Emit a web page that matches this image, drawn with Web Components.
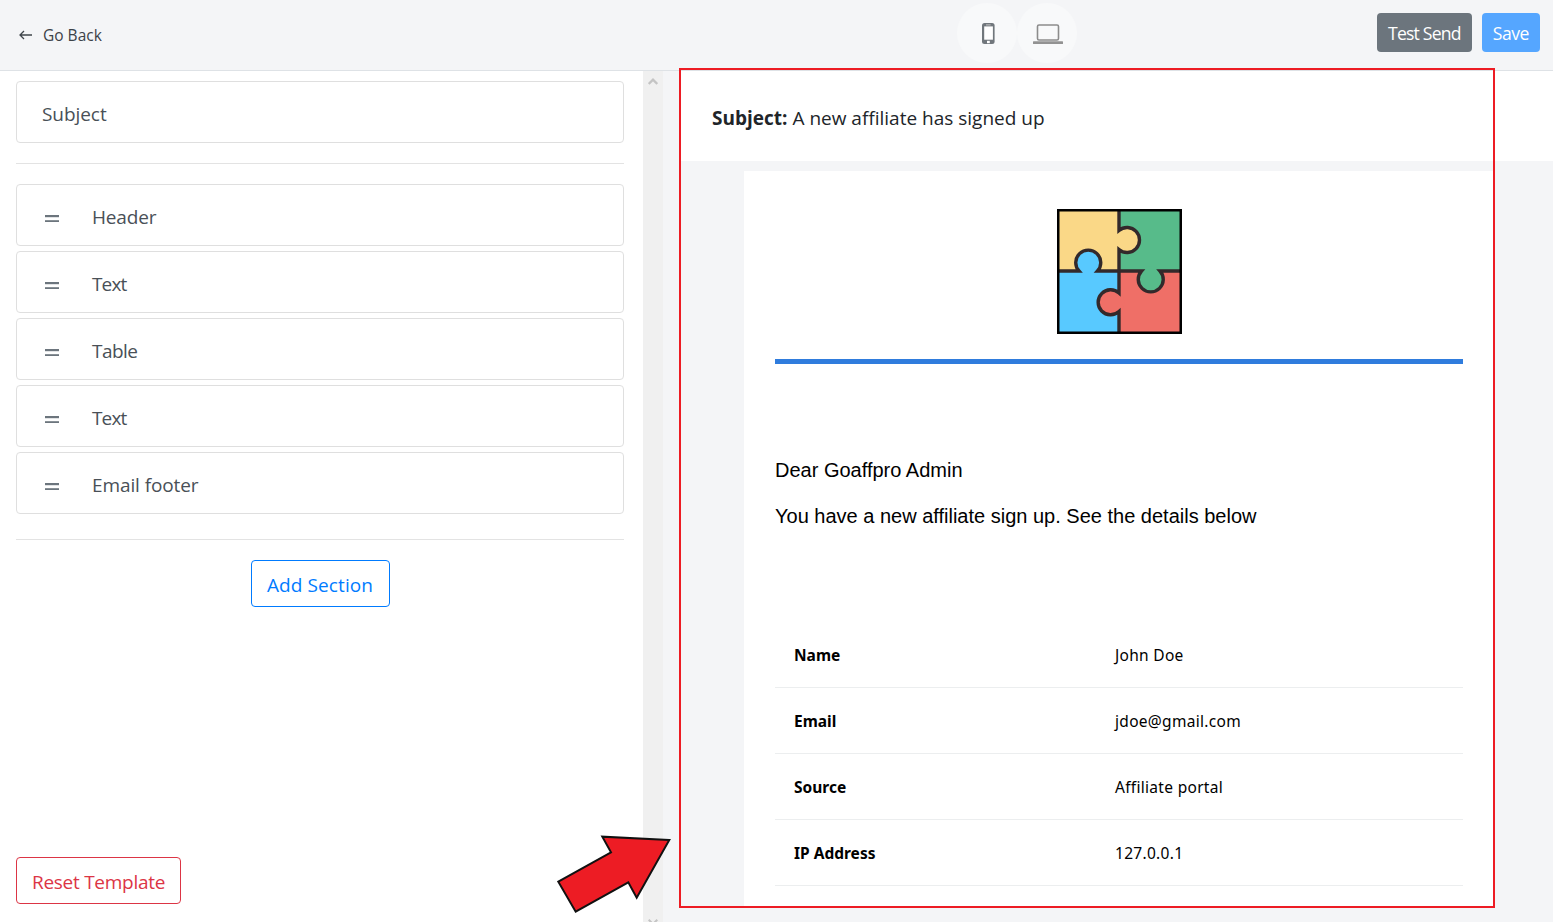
<!DOCTYPE html>
<html lang="en">
<head>
<meta charset="utf-8">
<title>Email template editor</title>
<style>
html,body{margin:0;padding:0;height:100%;overflow:hidden;background:#fff}
body{font-family:"Open Sans","Noto Sans",sans-serif;color:#212529}
editor-app{height:922px}
</style>
</head>
<body>
<editor-app>
  <top-bar slot="top"></top-bar>
  <side-panel slot="left">
    <section-row plain style="--ls:-.06px">Subject</section-row>
    <divider-line style="--before:20px;--after:20px"></divider-line>
    <section-row style="--ls:-.18px">Header</section-row>
    <section-row style="--ls:-.85px">Text</section-row>
    <section-row style="--ls:-.55px">Table</section-row>
    <section-row style="--ls:-.85px">Text</section-row>
    <section-row style="--ls:-.1px">Email footer</section-row>
    <divider-line style="--before:25px;--after:20px"></divider-line>
    <action-button tone="blue" centered style="--ls:.1px">Add Section</action-button>
    <action-button slot="foot" tone="red" style="--ls:-.28px">Reset Template</action-button>
  </side-panel>
  <fake-scrollbar slot="scroll"></fake-scrollbar>
  <email-preview slot="right">
    <strong slot="subject-label">Subject:</strong>
    <span slot="subject-text">A new affiliate has signed up</span>
    <info-row label="Name" value="John Doe"></info-row>
    <info-row label="Email" value="jdoe@gmail.com"></info-row>
    <info-row label="Source" value="Affiliate portal"></info-row>
    <info-row label="IP Address" value="127.0.0.1"></info-row>
  </email-preview>
  <callout-overlay slot="overlay"></callout-overlay>
</editor-app>
<script>
function def(name, html, init){
  customElements.define(name, class extends HTMLElement{
    constructor(){super();this.attachShadow({mode:'open'}).innerHTML=html;}
    connectedCallback(){ if(init) init(this); }
  });
}
def('editor-app',`<style>
:host{display:grid;grid-template-columns:643px 20px 1fr;grid-template-rows:71px 1fr;position:relative;overflow:hidden;width:1553px}
.top{grid-column:1/4}
.clip{min-height:0;overflow:hidden;display:flex}
::slotted(*){min-width:0}
</style>
<div class="top"><slot name="top"></slot></div>
<div class="clip"><slot name="left"></slot></div>
<div class="clip"><slot name="scroll"></slot></div>
<div class="clip"><slot name="right"></slot></div>
<slot name="overlay"></slot>`);

def('top-bar',`<style>
:host{display:flex;align-items:center;height:70px;border-bottom:1px solid #dee2e6;background:#f4f5f7;position:relative}
.back{display:flex;align-items:center;gap:11px;padding-left:19px;font-size:15.5px;color:#3c4248;margin-top:-1px}
.back svg{display:block;margin-top:1px}
.mid{position:absolute;left:957px;top:3px;display:flex}
.dev{width:60px;height:60px;border-radius:50%;background:#f8f9fa;display:flex;align-items:center;justify-content:center;padding:1px 0 0 2px;box-sizing:border-box}
.right{margin-left:auto;display:flex;gap:10px;padding-right:13px;margin-top:-5px}
.btn{height:39px;box-sizing:border-box;border-radius:4px;color:#fff;font-size:17.6px;letter-spacing:-.45px;display:flex;align-items:center;padding:0 11px}
.gray{background:#6c757d;letter-spacing:-.8px}.sv{background:#55a6ff}
</style>
<div class="back"><svg width="13" height="10" viewBox="0 0 13 10" fill="none" stroke="#3f454b" stroke-width="1.3"><path d="M13 5H1.2M5 1 1 5l4 4"/></svg><span>Go Back</span></div>
<div class="mid">
 <div class="dev"><svg width="13" height="21" viewBox="0 0 13 21"><rect x="0" y="0" width="12.600" height="21" rx="2.500" fill="#71777c"/><rect x="2.200" y="3.400" width="8.700" height="13.300" fill="#fff"/><rect x="4" y="1.400" width="4.600" height="1" fill="#c4c4c4"/><rect x="5" y="17.800" width="2.800" height="2.400" fill="#fff"/></svg></div>
 <div class="dev"><svg width="30" height="20" viewBox="0 0 30 20"><rect x="4.500" y="1" width="21" height="15" rx="1.500" fill="none" stroke="#8c8c8c" stroke-width="1.600"/><rect x="0" y="17.200" width="30" height="2.800" rx=".6" fill="#929292"/></svg></div>
</div>
<div class="right"><div class="btn gray">Test Send</div><div class="btn sv">Save</div></div>`);

def('side-panel',`<style>
:host{display:flex;flex-direction:column;width:643px;box-sizing:border-box;padding:10px 19px 18px 16px;background:#fff;height:851px}
.list{display:flex;flex-direction:column;gap:5px;flex:1}
.foot{display:flex}
</style>
<div class="list"><slot></slot></div>
<div class="foot"><slot name="foot"></slot></div>`);

def('section-row',`<style>
:host{display:flex;align-items:center;height:62px;box-sizing:border-box;border:1px solid #dfdfdf;border-radius:4px;font-size:19px;letter-spacing:var(--ls,0);color:#495057;background:#fff;padding-left:25px}
span{margin-top:3px}
svg{display:block;margin:7px 33px 0 3px;flex:none}
:host([plain]) svg{display:none}
</style>
<svg width="14" height="7.500" viewBox="0 0 14 7.500" fill="#6c757d"><rect y="0" width="14" height="2.200"/><rect y="5.200" width="14" height="2.200"/></svg><span><slot></slot></span>`);

def('divider-line',`<style>
:host{display:block;height:1px;background:#e3e3e3;margin:calc(var(--before) - 5px) 0 calc(var(--after) - 5px)}
</style>`);

def('action-button',`<style>
:host{display:flex}
:host([centered]){justify-content:center}
.b{height:47px;min-width:139px;justify-content:center;box-sizing:border-box;border:1px solid currentColor;border-radius:4px;display:flex;align-items:center;padding:2px 15px 0;font-size:19px;letter-spacing:var(--ls,0);background:#fff}
:host([tone=blue]) .b{color:#007bff}
:host([tone=red]) .b{color:#dc3545}
</style><div class="b"><slot></slot></div>`);

def('fake-scrollbar',`<style>
:host{display:flex;flex-direction:column;justify-content:space-between;width:20px;background:#f0f0f0;height:851px;box-sizing:border-box;padding:7px 0 0;overflow:hidden}
svg{display:block;margin:0 auto}
.d{margin-bottom:-3px}
</style>
<svg width="10" height="7" viewBox="0 0 10 7" fill="none" stroke="#c4c4c4" stroke-width="2.400"><path d="M.7 6 5 1.700 9.300 6"/></svg>
<svg class="d" width="10" height="6" viewBox="0 0 10 6" fill="none" stroke="#c4c4c4" stroke-width="2"><path d="M.7.7 5 5 9.300.7"/></svg>`);

def('email-preview',`<style>
:host{display:flex;flex-direction:column;flex:1;background:#f4f5f7;height:851px;overflow:hidden}
.subject{height:90px;background:#fff;display:flex;align-items:center;gap:5px;margin-left:17px;padding:4px 0 0 32px;font-size:19px;color:#212529;flex:none;box-sizing:border-box}
.wrap{padding:10px 0 0 81px;flex:1}
.card{width:750px;background:#fff;box-sizing:border-box;padding:38px 31px 0;height:736px;overflow:hidden}
.logo{display:flex;justify-content:center}
.logo svg{display:block}
.rule{height:5px;background:#2f7cdd;margin-top:25px}
.copy{font-family:"Liberation Sans",Arial,sans-serif;font-size:20px;color:#000;line-height:23px;padding-top:95px}
.copy p{margin:0 0 23px}
.rows{margin-top:94px;display:flex;flex-direction:column}
</style>
<div class="subject"><slot name="subject-label"></slot><slot name="subject-text"></slot></div>
<div class="wrap"><div class="card">
 <div class="logo"><svg width="125" height="125" viewBox="0 0 125 125">
  <rect width="62" height="62" fill="#fad887"/><rect x="62" width="63" height="62" fill="#57bb8a"/><rect y="62" width="62" height="63" fill="#58c9ff"/><rect x="62" y="62" width="63" height="63" fill="#ef6f67"/>
  <circle cx="69.700" cy="31" r="12.500" fill="#fad887"/><rect x="60" y="21.400" width="5" height="19.200" fill="#fad887"/>
  <circle cx="31.300" cy="54.300" r="12.500" fill="#58c9ff"/><rect x="22" y="58" width="18.500" height="6" fill="#58c9ff"/>
  <circle cx="93.700" cy="69.700" r="12.500" fill="#57bb8a"/><rect x="84.500" y="60" width="18.500" height="5" fill="#57bb8a"/>
  <circle cx="54.700" cy="93.300" r="12.500" fill="#ef6f67"/><rect x="58" y="84" width="6" height="18.600" fill="#ef6f67"/>
  <g fill="none" stroke="#33292b" stroke-width="3.400">
   <path d="M62 0V21.400A12.500 12.500 0 1 1 62 40.600V62"/>
   <path d="M0 62H22A12.500 12.500 0 1 1 40.500 62H62"/>
   <path d="M62 62H84.500A12.500 12.500 0 1 0 103 62H125"/>
   <path d="M62 62V84A12.500 12.500 0 1 0 62 102.600V125"/>
  </g>
  <rect x="1.250" y="1.250" width="122.500" height="122.500" fill="none" stroke="#000" stroke-width="2.500"/>
 </svg></div>
 <div class="rule"></div>
 <div class="copy"><p>Dear Goaffpro Admin</p><p>You have a new affiliate sign up. See the details below</p></div>
 <div class="rows"><slot></slot></div>
</div></div>`);

def('info-row',`<style>
:host{display:grid;grid-template-columns:321px 1fr;height:66px;flex:none;box-sizing:border-box;border-bottom:1px solid #eceeef;align-items:center;padding-left:19px;font-size:15.5px;color:#000;font-family:"Noto Sans","Open Sans",sans-serif}
b{font-weight:700}
span{letter-spacing:.3px}
</style><b></b><span></span>`,el=>{
  el.shadowRoot.querySelector('b').textContent=el.getAttribute('label');
  el.shadowRoot.querySelector('span').textContent=el.getAttribute('value');
});

def('callout-overlay',`<style>
:host{display:block;position:absolute;inset:0;pointer-events:none}
.frame{position:absolute;left:679px;top:68px;width:816px;height:840px;box-sizing:border-box;border:2px solid #ed1c24}
svg{position:absolute;left:0;top:0}
</style>
<div class="frame"></div>
<svg width="1553" height="922"><polygon points="669.300,840 602.300,836.700 611,852.300 558.300,881.700 575.700,911.700 628.300,882.300 636.700,897.700" fill="#ed1c24" stroke="#111" stroke-width="2"/></svg>`);
</script>
</body>
</html>
